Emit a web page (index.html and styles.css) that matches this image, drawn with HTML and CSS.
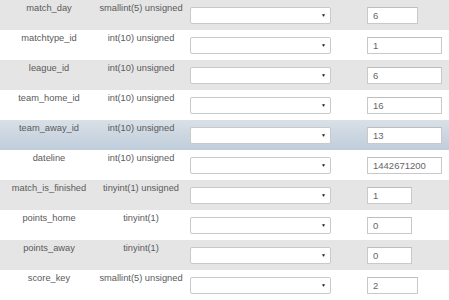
FILE: index.html
```html
<!DOCTYPE html>
<html lang="en">
<head>
  <meta charset="UTF-8" />
  <title>Insert row</title>
  <link rel="stylesheet" href="styles.css">
</head>
<body>
  <table class="fields">
    <colgroup>
      <col class="col-name">
      <col class="col-type">
      <col class="col-func">
      <col class="col-value">
    </colgroup>
    <tbody>
      <tr class="odd">
        <td class="name">match_day</td>
        <td class="type">smallint(5) unsigned</td>
        <td class="func"><div class="sel"><select><option></option></select><span class="arrow">&#9660;</span></div></td>
        <td class="value"><input type="text" class="w5" value="6"></td>
      </tr>
      <tr>
        <td class="name">matchtype_id</td>
        <td class="type">int(10) unsigned</td>
        <td class="func"><div class="sel"><select><option></option></select><span class="arrow">&#9660;</span></div></td>
        <td class="value"><input type="text" class="w10" value="1"></td>
      </tr>
      <tr class="odd">
        <td class="name">league_id</td>
        <td class="type">int(10) unsigned</td>
        <td class="func"><div class="sel"><select><option></option></select><span class="arrow">&#9660;</span></div></td>
        <td class="value"><input type="text" class="w10" value="6"></td>
      </tr>
      <tr>
        <td class="name">team_home_id</td>
        <td class="type">int(10) unsigned</td>
        <td class="func"><div class="sel"><select><option></option></select><span class="arrow">&#9660;</span></div></td>
        <td class="value"><input type="text" class="w10" value="16"></td>
      </tr>
      <tr class="hover">
        <td class="name">team_away_id</td>
        <td class="type">int(10) unsigned</td>
        <td class="func"><div class="sel"><select><option></option></select><span class="arrow">&#9660;</span></div></td>
        <td class="value"><input type="text" class="w10" value="13"></td>
      </tr>
      <tr>
        <td class="name">dateline</td>
        <td class="type">int(10) unsigned</td>
        <td class="func"><div class="sel"><select><option></option></select><span class="arrow">&#9660;</span></div></td>
        <td class="value"><input type="text" class="w10" value="1442671200"></td>
      </tr>
      <tr class="odd">
        <td class="name">match_is_finished</td>
        <td class="type">tinyint(1) unsigned</td>
        <td class="func"><div class="sel"><select><option></option></select><span class="arrow">&#9660;</span></div></td>
        <td class="value"><input type="text" class="w1" value="1"></td>
      </tr>
      <tr>
        <td class="name">points_home</td>
        <td class="type">tinyint(1)</td>
        <td class="func"><div class="sel"><select><option></option></select><span class="arrow">&#9660;</span></div></td>
        <td class="value"><input type="text" class="w1" value="0"></td>
      </tr>
      <tr class="odd">
        <td class="name">points_away</td>
        <td class="type">tinyint(1)</td>
        <td class="func"><div class="sel"><select><option></option></select><span class="arrow">&#9660;</span></div></td>
        <td class="value"><input type="text" class="w1" value="0"></td>
      </tr>
      <tr>
        <td class="name">score_key</td>
        <td class="type">smallint(5) unsigned</td>
        <td class="func"><div class="sel"><select><option></option></select><span class="arrow">&#9660;</span></div></td>
        <td class="value"><input type="text" class="w5" value="2"></td>
      </tr>
    </tbody>
  </table>
</body>
</html>
```

FILE: styles.css
```css
body {
  margin: 0;
  background: #fff;
  font-family: "Liberation Sans", Arial, sans-serif;
  font-size: 9.3px;
  color: #5a5a5a;
}
.fields {
  width: 449px;
  border-collapse: collapse;
  table-layout: fixed;
  border-bottom: 1px solid #e4e4e4;
}
.col-name { width: 98px; }
.col-type { width: 86px; }
.col-func { width: 177px; }
.col-value { width: 88px; }
.fields td {
  height: 30px;
  padding: 0;
  vertical-align: top;
  box-sizing: border-box;
}
.fields tr.odd td {
  background: #e5e5e5;
}
.fields tr.hover td {
  background: linear-gradient(#d9e0e7, #bfcddb);
}
.name, .type {
  text-align: center;
  padding-top: 3px !important;
  line-height: 11px;
  white-space: nowrap;
}
.func, .value {
  padding: 7px 0 0 6px !important;
}
.sel {
  position: relative;
  width: 141px;
  height: 17px;
}
.sel select {
  -webkit-appearance: none;
  appearance: none;
  display: block;
  width: 141px;
  height: 17px;
  margin: 0;
  border: 1px solid #c9c9c9;
  border-radius: 2px;
  background: #fff;
}
.arrow {
  position: absolute;
  right: 5px;
  top: 4px;
  font-size: 5px;
  line-height: 8px;
  color: #222;
  pointer-events: none;
}
input {
  display: block;
  height: 17px;
  margin: 0;
  padding: 0 5px;
  box-sizing: border-box;
  border: 1px solid #c9c9c9;
  border-top-color: #bdbdbd;
  background: #fff;
  font-family: "Liberation Sans", Arial, sans-serif;
  font-size: 9.5px;
  color: #666;
}
.w1 { width: 45px; }
.w5 { width: 51px; }
.w10 { width: 75px; }
```
